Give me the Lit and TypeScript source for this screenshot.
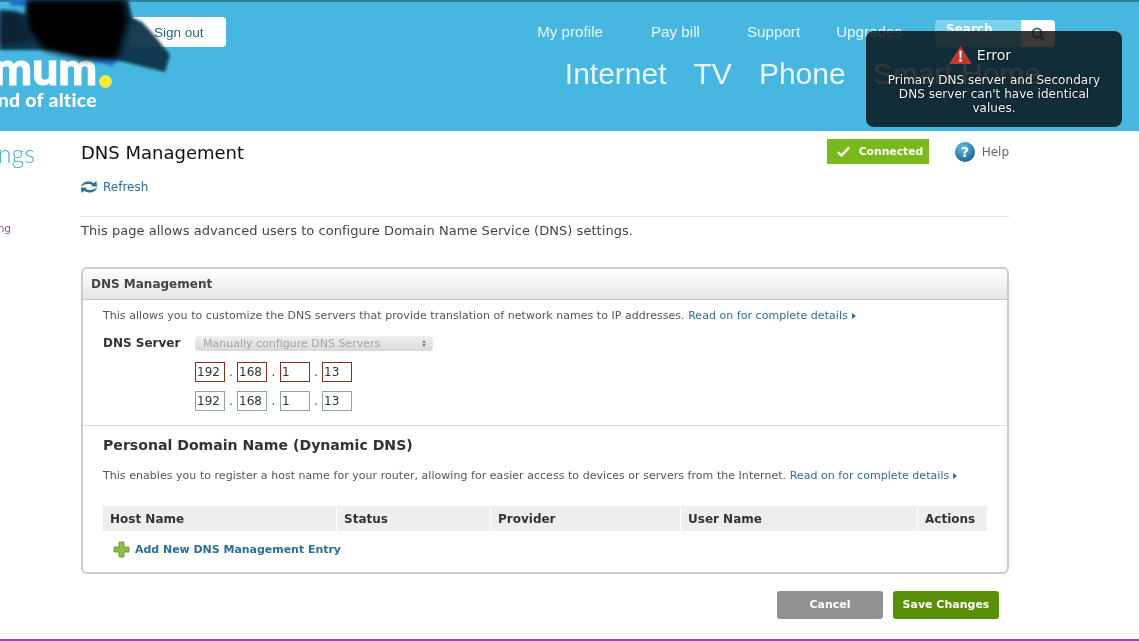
import { LitElement, html, css } from "lit";
import { customElement } from "lit/decorators.js";

@customElement("app-root")
export class AppRoot extends LitElement {
  static styles = css`
    :host { display: block; position: relative; width: 1139px; height: 641px; overflow: hidden; background: #fff; font-family: "DejaVu Sans", Verdana, sans-serif; color: #444; }
    * { box-sizing: border-box; }
    a { color: #2a7099; text-decoration: none; }
    header { height: 131px; background: #47b7e2; border-top: 2px solid #2f7f9e; display: flex; font-family: "Liberation Sans", Arial, sans-serif; }
    .brand { width: 226px; padding-top: 15px; flex: none; display: flex; flex-direction: column; align-items: flex-end; }
    .signout { width: 96px; height: 30px; background: #fff; border-radius: 4px; color: #2b6a85; font-size: 13.5px; display: flex; align-items: center; padding-left: 24px; }
    .logo { width: 226px; height: 70px; overflow: hidden; display: flex; flex-direction: column; align-items: flex-start; }
    .logo-main { width: 112px; height: 44px; display: flex; justify-content: flex-end; align-items: flex-end; font-family: "Lato", sans-serif; font-weight: 900; color: #fff; font-size: 46px; line-height: 46px; white-space: nowrap; overflow: hidden; -webkit-text-stroke: 1px #fff; }
    .dot { width: 13px; height: 13px; border-radius: 50%; background: #f7ea3b; flex: none; margin: 0 0 3px 2px; }
    .logo-sub { width: 97px; display: flex; justify-content: flex-end; overflow: hidden; white-space: nowrap; font-family: "Lato", sans-serif; font-weight: 900; font-size: 19.5px; letter-spacing: .25px; color: #fff; line-height: 20px; margin-top: -1px; }
    .nav { flex: 1; display: flex; flex-direction: column; align-items: flex-end; padding: 18px 84px 0 0; color: #e6f6fc; }
    .util { display: flex; align-items: flex-start; font-size: 15.2px; height: 27px; }
    .util span { line-height: 24px; }
    .search { display: flex; width: 120px; height: 27px; margin-left: 33px; }
    .search-in { width: 86px; background: #7cd2ec; border-radius: 4px 0 0 4px; color: #fff; font-weight: 700; font-size: 12px; padding: 2px 0 0 11px; font-family: "DejaVu Sans", sans-serif; }
    .search-btn { width: 34px; background: #fff; border-radius: 0 4px 4px 0; display: flex; align-items: center; justify-content: center; }
    .m1 { margin-left: 48px; } .m2 { margin-left: 47px; } .m3 { margin-left: 36px; }
    .main-nav { display: flex; gap: 27px; font-size: 30px; line-height: 36px; margin: 9px 14px 0 0; }
    .body { display: flex; height: 508px; }
    .side { width: 81px; flex: none; }
    .side-h { width: 35px; overflow: hidden; display: flex; justify-content: flex-end; white-space: nowrap; color: #4fb3cf; font-family: "Lato", sans-serif; font-weight: 300; font-size: 25px; line-height: 30px; margin-top: 7px; }
    .side-l { width: 11px; overflow: hidden; display: flex; justify-content: flex-end; white-space: nowrap; color: #9b4a9b; font-size: 10.5px; line-height: 14px; margin-top: 53px; }
    .content { width: 928px; }
    .top { display: flex; height: 86px; border-bottom: 1px solid #e3e3e3; }
    .top-left { flex: 1; }
    h1 { margin: 10px 0 0; font-size: 18px; font-weight: 400; color: #111; line-height: 24px; }
    .refresh { display: flex; align-items: center; gap: 6px; font-size: 12px; margin-top: 13px; height: 18px; }
    .status { display: flex; align-items: flex-start; padding-top: 8px; }
    .connected { width: 102px; height: 25px; background: #7ab91a; color: #fff; font-size: 10.8px; font-weight: 700; display: flex; align-items: center; gap: 9px; padding-left: 10px; }
    .help { display: flex; align-items: center; gap: 7px; margin-left: 26px; font-size: 12px; color: #666; height: 25px; }
    .intro { font-size: 13px; letter-spacing: .04px; line-height: 16px; margin: 6px 0 28px; color: #444; }
    .panel { border: 2px solid #ccc; border-radius: 6px; height: 307px; display: flex; flex-direction: column; }
    .panel-h { height: 31px; background: linear-gradient(#fff, #e6e6e6); border-bottom: 1px solid #c4c4c4; font-size: 12px; font-weight: 700; padding-left: 8px; display: flex; align-items: center; color: #444; border-radius: 4px 4px 0 0; }
    .sec { padding: 0 20px; }
    .desc { font-size: 11px; letter-spacing: .04px; line-height: 14px; color: #555; white-space: nowrap; }
    .desc a::after { content: ""; display: inline-block; border-left: 4px solid #2a7099; border-top: 3.5px solid transparent; border-bottom: 3.5px solid transparent; margin-left: 4px; }
    .sec1 { height: 126px; border-bottom: 1px solid #ddd; padding-top: 9px; }
    .dns { display: flex; margin-top: 13px; }
    .dns-l { width: 92px; font-size: 12px; font-weight: 700; color: #333; line-height: 15px; }
    .dns-f { display: flex; flex-direction: column; }
    .select { width: 238px; height: 15px; background: linear-gradient(#f0f0f0, #d9d9d9); border-radius: 4px; font-size: 11px; color: #a5a5a5; display: flex; justify-content: space-between; align-items: center; padding: 0 7px 0 8px; }
    .arrows { display: flex; flex-direction: column; gap: 1px; }
    .up { border-left: 2.5px solid transparent; border-right: 2.5px solid transparent; border-bottom: 3px solid #888; }
    .down { border-left: 2.5px solid transparent; border-right: 2.5px solid transparent; border-top: 3px solid #888; }
    .ip { display: flex; height: 20px; margin-top: 11px; align-items: center; }
    .ip + .ip { margin-top: 9px; }
    .box { width: 30px; height: 20px; border: 1px solid #8aa3b5; font-size: 12px; line-height: 18px; padding-left: 1px; color: #333; }
    .bad .box { border-color: #8b2c22; }
    .sep { width: 12px; text-align: center; font-size: 12px; color: #444; }
    .sep.n { width: 13px; }
    h2 { margin: 10px 0 0; font-size: 14.1px; font-weight: 700; color: #333; line-height: 18px; }
    .sec2 .desc { margin-top: 15px; }
    .table { display: flex; margin-top: 23px; height: 25px; gap: 1px; width: 884px; }
    .th { background: #eee; font-size: 12px; font-weight: 700; color: #333; display: flex; align-items: center; padding-left: 7px; }
    .add { display: flex; align-items: center; gap: 5px; font-size: 11px; font-weight: 700; padding-left: 10px; margin-top: 9px; height: 18px; letter-spacing: -.03px; }
    .actions { display: flex; justify-content: flex-end; gap: 10px; padding-right: 10px; margin-top: 17px; }
    .btn { width: 106px; height: 28px; padding-bottom: 2px; border-radius: 3px; color: #fff; font-size: 11px; font-weight: 700; display: flex; align-items: center; justify-content: center; }
    .cancel { background: #919191; }
    .save { background: #5a8f0a; }
    footer { position: absolute; left: 0; right: 0; bottom: 0; height: 2px; background: #9b4a9b; }
    .scribble { position: absolute; left: 0; top: 0; pointer-events: none; }
    .toast { position: absolute; left: 866px; top: 31px; width: 256px; height: 96px; color: #f4f4f4; font-size: 12px; letter-spacing: .03px; line-height: 14px; text-align: center; padding: 14px 18px 0; text-shadow: 0 0 2px #000; }
    .toast::before, .toast::after { content: ""; position: absolute; inset: 0; border-radius: 8px; }
    .toast::before { background: rgb(60, 43, 0); mix-blend-mode: multiply; }
    .toast::after { background: rgb(0, 16, 56); mix-blend-mode: screen; }
    .toast-text { position: relative; z-index: 1; }
    .toast-h { display: flex; align-items: center; justify-content: center; gap: 5px; font-size: 14px; line-height: 21px; margin-bottom: 7px; padding-right: 28px; }
    .toast-h svg { margin-bottom: 2px; }
  `;

  private cols: [string, number][] = [["Host Name", 233], ["Status", 153], ["Provider", 189], ["User Name", 236], ["Actions", 69]];

  private ip(bad: boolean) {
    return html`<div class="ip ${bad ? "bad" : ""}">
      <span class="box">192</span><span class="sep">.</span><span class="box">168</span><span class="sep n">.</span><span class="box">1</span><span class="sep">.</span><span class="box">13</span>
    </div>`;
  }

  render() {
    return html`
      <header>
        <div class="brand">
          <a class="signout">Sign out</a>
          <div class="logo">
            <div class="logo-main">optimum<span class="dot"></span></div>
            <div class="logo-sub">a brand of altice</div>
          </div>
        </div>
        <div class="nav">
          <div class="util">
            <span>My profile</span><span class="m1">Pay bill</span><span class="m2">Support</span><span class="m3">Upgrades</span>
            <div class="search">
              <div class="search-in">Search</div>
              <div class="search-btn"><svg width="16" height="16" viewBox="0 0 16 16" fill="none" stroke="#47788c" stroke-width="2"><circle cx="7" cy="7" r="4.5"/><path d="M10.5 10.5 14 14"/></svg></div>
            </div>
          </div>
          <div class="main-nav"><span>Internet</span><span>TV</span><span>Phone</span><span>Smart Home</span></div>
        </div>
      </header>
      <div class="body">
        <div class="side">
          <div class="side-h">Settings</div>
          <div class="side-l">Port Forwarding</div>
        </div>
        <div class="content">
          <div class="top">
            <div class="top-left">
              <h1>DNS Management</h1>
              <a class="refresh">
                <svg width="16" height="12" viewBox="0 0 16 12"><path d="M0 5.5C1 2 4 .5 7.5.5c2.200 0 3.700.5 5 1.700L15.500 0l.5 5.500H10l1.500-1.300C10.500 3.500 9.300 3 7.500 3 4.500 3 2.500 3.800 0 5.500Z" fill="#2a7099"/><path d="M16 6.500C15 10 12 11.500 8.500 11.500c-2.200 0-3.700-.5-5-1.700L.5 12 0 6.500h6L4.500 7.800C5.500 8.500 6.700 9 8.500 9c3 0 5-.8 7.500-2.500Z" fill="#2a7099"/></svg>
                Refresh
              </a>
            </div>
            <div class="status">
              <div class="connected">
                <svg width="13" height="11" viewBox="0 0 13 11"><path d="M1 6 4.500 9.500 12 1.500" fill="none" stroke="#fff" stroke-width="2.400"/></svg>
                Connected
              </div>
              <div class="help">
                <svg width="20" height="20" viewBox="0 0 20 20"><defs><radialGradient id="q" cx=".4" cy=".3" r=".8"><stop offset="0" stop-color="#6cbde6"/><stop offset="1" stop-color="#0f5a8f"/></radialGradient></defs><circle cx="10" cy="10" r="10" fill="url(#q)"/><text x="10" y="15" text-anchor="middle" font-size="14" font-weight="700" fill="#fff" font-family="DejaVu Sans">?</text></svg>
                Help
              </div>
            </div>
          </div>
          <p class="intro">This page allows advanced users to configure Domain Name Service (DNS) settings.</p>
          <section class="panel">
            <div class="panel-h">DNS Management</div>
            <div class="sec sec1">
              <div class="desc">This allows you to customize the DNS servers that provide translation of network names to IP addresses. <a>Read on for complete details</a></div>
              <div class="dns">
                <div class="dns-l">DNS Server</div>
                <div class="dns-f">
                  <div class="select">Manually configure DNS Servers<span class="arrows"><i class="up"></i><i class="down"></i></span></div>
                  ${this.ip(true)}
                  ${this.ip(false)}
                </div>
              </div>
            </div>
            <div class="sec sec2">
              <h2>Personal Domain Name (Dynamic DNS)</h2>
              <div class="desc">This enables you to register a host name for your router, allowing for easier access to devices or servers from the Internet. <a>Read on for complete details</a></div>
              <div class="table">
                ${this.cols.map(([n, w]) => html`<div class="th" style="width:${w}px">${n}</div>`)}
              </div>
              <a class="add">
                <svg width="17" height="17" viewBox="0 0 17 17"><path d="M6 1.500Q6 1 6.500 1h4q.5 0 .5.5V6h4.500q.5 0 .5.5v4q0 .5-.5.5H11v4.500q0 .5-.5.5h-4q-.5 0-.5-.5V11H1.500q-.5 0-.5-.5v-4Q1 6 1.500 6H6Z" fill="#8fbb4a" stroke="#6f9a35"/></svg>
                Add New DNS Management Entry
              </a>
            </div>
          </section>
          <div class="actions"><div class="btn cancel">Cancel</div><div class="btn save">Save Changes</div></div>
        </div>
      </div>
      <svg class="scribble" width="180" height="80" viewBox="0 0 180 80">
        <defs><filter id="b1"><feGaussianBlur stdDeviation="3"/></filter><filter id="b2"><feGaussianBlur stdDeviation="1.500"/></filter></defs>
        <path d="M92 60 112 66 118 60 100 52Z" fill="#1e6fd0" filter="url(#b2)"/>
        <path d="M10 0H30V6H10ZM125 14 138 22 132 26Z" fill="#1e6fd0" filter="url(#b2)"/>
        <path d="M0 10 25 14 28 0H128L132 18 142 22 153 34 170 55 165 72 125 62 105 58 60 50 0 50Z" fill="#0f3048" filter="url(#b2)" opacity=".94"/>
        <path d="M27 0H124L128 20 118 58 85 60 45 50 28 30Z" fill="#000" filter="url(#b1)"/>
        <path d="M0 12 18 12 34 40 0 46Z" fill="#0b2030" filter="url(#b1)"/>
      </svg>
      <div class="toast">
        <div class="toast-text">
          <div class="toast-h">
            <svg width="23" height="18" viewBox="0 0 24 19"><path d="M12 0 24 19H0Z" fill="#c0392b"/><path d="M10.800 5h2.400l-.4 8h-1.600Z" fill="#fff"/><rect x="10.800" y="14" width="2.400" height="2.600" fill="#fff"/></svg>
            Error
          </div>
          Primary DNS server and Secondary DNS server can't have identical values.
        </div>
      </div>
      <footer></footer>
    `;
  }
}
